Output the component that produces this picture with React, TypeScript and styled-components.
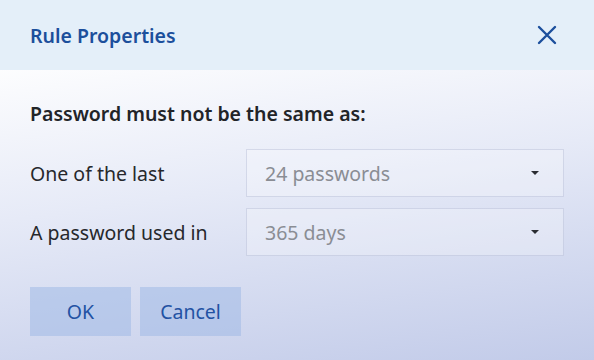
import styled, { createGlobalStyle } from 'styled-components';

const GlobalStyle = createGlobalStyle`
  html, body {
    margin: 0;
    padding: 0;
  }

  body {
    font-family: 'Noto Sans', 'Open Sans', sans-serif;
    width: 594px;
    height: 360px;
    overflow: hidden;
  }
`;

const Dialog = styled.div`
  width: 594px;
  height: 360px;
  display: flex;
  flex-direction: column;
  background: linear-gradient(172deg, #ffffff 0%, #ffffff 12%, #e6eaf7 50%, #c2cbe9 100%);
`;

const Header = styled.header`
  height: 70px;
  box-sizing: border-box;
  padding: 0 36px 0 30px;
  display: flex;
  align-items: center;
  justify-content: space-between;
  background-color: #e4eff9;
`;

const Title = styled.h1`
  margin: 0;
  font-size: 19.5px;
  font-weight: 600;
  color: #1c4f9c;
`;

const CloseButton = styled.button`
  border: none;
  background: none;
  padding: 0;
  width: 22px;
  height: 22px;
  display: flex;
  align-items: center;
  justify-content: center;
  cursor: pointer;
`;

const Body = styled.div`
  flex: 1;
  padding: 31px 30px 0 30px;
  display: flex;
  flex-direction: column;
`;

const Heading = styled.p`
  margin: 0 0 22px 0;
  font-size: 19.5px;
  font-weight: 600;
  color: #222428;
  line-height: 26px;
`;

const Rows = styled.div`
  display: flex;
  flex-direction: column;
  gap: 11px;
`;

const Row = styled.div`
  display: flex;
  align-items: center;
`;

const Label = styled.label`
  width: 216px;
  font-size: 19.5px;
  color: #26282c;
`;

const Select = styled.div`
  width: 318px;
  height: 48px;
  box-sizing: border-box;
  padding: 0 24px 0 18px;
  display: flex;
  align-items: center;
  justify-content: space-between;
  border: 1px solid rgba(160, 170, 200, 0.35);
  background-color: rgba(255, 255, 255, 0.25);
  font-size: 19.5px;
  color: #8a8d94;
`;

const Caret = styled.span`
  width: 0;
  height: 0;
  border-left: 4px solid transparent;
  border-right: 4px solid transparent;
  border-top: 4px solid #2a2c32;
`;

const Actions = styled.div`
  margin-top: 31px;
  display: flex;
  gap: 9px;
`;

const Button = styled.button`
  width: 101px;
  height: 49px;
  border: none;
  background-color: rgba(160, 185, 230, 0.55);
  font-family: inherit;
  font-size: 19.5px;
  color: #2352a3;
  cursor: pointer;
`;

const rows = [
  { label: 'One of the last', value: '24 passwords' },
  { label: 'A password used in', value: '365 days' },
];

function App() {
  return (
    <>
      <GlobalStyle />
      <Dialog>
        <Header>
          <Title>Rule Properties</Title>
          <CloseButton aria-label="Close">
            <svg width="20" height="20" viewBox="0 0 20 20">
              <path d="M2 2 L18 18 M18 2 L2 18" stroke="#1c4f9c" strokeWidth="2.4" strokeLinecap="round" />
            </svg>
          </CloseButton>
        </Header>
        <Body>
          <Heading>Password must not be the same as:</Heading>
          <Rows>
            {rows.map((row) => (
              <Row key={row.label}>
                <Label>{row.label}</Label>
                <Select>
                  <span>{row.value}</span>
                  <Caret />
                </Select>
              </Row>
            ))}
          </Rows>
          <Actions>
            <Button>OK</Button>
            <Button>Cancel</Button>
          </Actions>
        </Body>
      </Dialog>
    </>
  );
}

export default App;
